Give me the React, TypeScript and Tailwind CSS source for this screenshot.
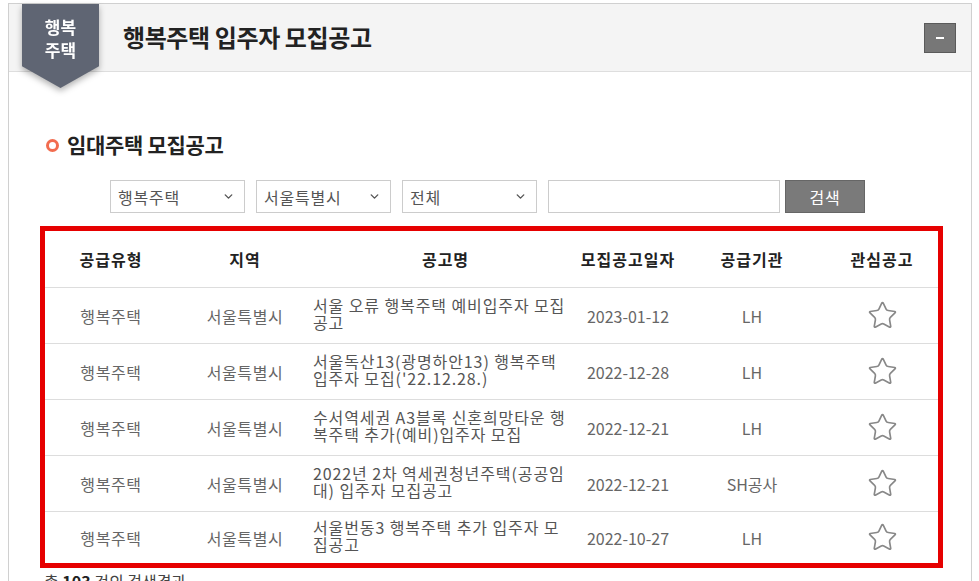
import { ChevronDown, Star } from 'lucide-react'

const rows = [
    { type: '행복주택', region: '서울특별시', title: ['서울 오류 행복주택 예비입주자 모집', '공고'], date: '2023-01-12', org: 'LH' },
    { type: '행복주택', region: '서울특별시', title: ['서울독산13(광명하안13) 행복주택', "입주자 모집('22.12.28.)"], date: '2022-12-28', org: 'LH' },
    { type: '행복주택', region: '서울특별시', title: ['수서역세권 A3블록 신혼희망타운 행', '복주택 추가(예비)입주자 모집'], date: '2022-12-21', org: 'LH' },
    { type: '행복주택', region: '서울특별시', title: ['2022년 2차 역세권청년주택(공공임', '대) 입주자 모집공고'], date: '2022-12-21', org: 'SH공사' },
    { type: '행복주택', region: '서울특별시', title: ['서울번동3 행복주택 추가 입주자 모', '집공고'], date: '2022-10-27', org: 'LH' },
]

function Select({ label }: { label: string }) {
    return (
        <div className="w-[135px] h-[33px] border border-[#cccccc] bg-white flex items-center justify-between pl-[7px] pr-[9px] text-[16px] tracking-[0.8px] text-[#555]">
            <span>{label}</span>
            <ChevronDown className="w-[13px] h-[13px] text-[#555]" strokeWidth={2.6} />
        </div>
    )
}

export default function App() {
    return (
        <div className="min-h-screen bg-white pt-[3px] pl-[8px] font-['Noto_Sans_CJK_KR','Malgun_Gothic',sans-serif]">
            <div className="w-[964px] border border-[#d0d0d0]">
                {/* Header */}
                <div className="relative h-[68px] bg-[#f4f4f4] border-b border-[#dedede] flex items-center">
                    <div className="absolute left-[13px] top-0 z-10 drop-shadow-[0_3px_3px_rgba(0,0,0,0.3)]">
                        <div className="w-[77px] h-[84px] bg-[#5f6573] [clip-path:polygon(0_0,100%_0,100%_74%,50%_100%,0_74%)] flex justify-center pt-[11px]">
                            <span className="text-white font-bold text-[17px] leading-[23px] text-center">행복<br />주택</span>
                        </div>
                    </div>
                    <h1 className="ml-[114px] text-[24px] font-bold tracking-[-0.4px] text-[#222] mt-[-2px]">행복주택 입주자 모집공고</h1>
                    <button className="ml-auto mr-[15px] w-[32px] h-[30px] bg-[#777] border border-[#5a5a5a] flex items-center justify-center">
                        <span className="block w-[8px] h-[2px] bg-white" />
                    </button>
                </div>

                {/* Body */}
                <div className="pt-[61px] pb-[40px]">
                    <div className="flex items-center pl-[37px] h-[24px]">
                        <span className="w-[13px] h-[13px] rounded-full border-[3px] border-[#f26c4f]" />
                        <h2 className="ml-[8px] text-[21px] font-bold text-[#222] tracking-[-0.3px]">임대주택 모집공고</h2>
                    </div>

                    <div className="flex items-center pl-[101px] mt-[23px]">
                        <div className="flex gap-[11px]">
                            <Select label="행복주택" />
                            <Select label="서울특별시" />
                            <Select label="전체" />
                        </div>
                        <input className="ml-[11px] w-[232px] h-[33px] border border-[#cccccc] bg-white outline-none" />
                        <button className="ml-[5px] w-[80px] h-[33px] bg-[#7a7a7a] border border-[#666] text-white text-[16px] tracking-[0.8px]">검색</button>
                    </div>

                    <div className="ml-[31px] mt-[13px] w-[903px] border-[5px] border-[#e60000]">
                        <div className="grid grid-cols-[132px_136px_265px_100px_148px_112px] h-[56px] items-center text-[16px] tracking-[1px] font-bold text-[#222] text-center">
                            <div>공급유형</div>
                            <div>지역</div>
                            <div>공고명</div>
                            <div>모집공고일자</div>
                            <div>공급기관</div>
                            <div>관심공고</div>
                        </div>
                        {rows.map((r, i) => (
                            <div
                                key={i}
                                className={`grid grid-cols-[132px_136px_265px_100px_148px_112px] items-center border-t border-[#dddddd] text-[16px] text-[#666] text-center ${i === rows.length - 1 ? 'h-[52px]' : 'h-[56px]'}`}
                            >
                                <div className="tracking-[0.6px]">{r.type}</div>
                                <div className="tracking-[0.6px]">{r.region}</div>
                                <div className="text-left text-[#555] leading-[17px] tracking-[0.9px] whitespace-nowrap mt-[-4px]">
                                    {r.title[0]}<br />{r.title[1]}
                                </div>
                                <div>{r.date}</div>
                                <div>{r.org}</div>
                                <div className="flex justify-center">
                                    <Star className="w-[31px] h-[31px] text-[#888]" strokeWidth={1.3} />
                                </div>
                            </div>
                        ))}
                    </div>

                    <p className="ml-[35px] mt-[1px] text-[16px] text-[#444]">총 <b className="text-[#222]">103</b> 건의 검색결과</p>
                </div>
            </div>
        </div>
    )
}
